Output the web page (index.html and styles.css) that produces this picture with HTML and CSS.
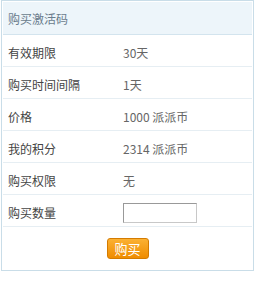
FILE: index.html
```html
<!DOCTYPE html>
<html lang="zh-CN">
<head>
<meta charset="UTF-8">
<title>购买激活码</title>
<link rel="stylesheet" href="styles.css">
</head>
<body>

<div class="box">
<div class="box-title">购买激活码</div>

<div class="row"><span class="label">有效期限</span><span class="value">30天</span></div>
<div class="row"><span class="label">购买时间间隔</span><span class="value">1天</span></div>
<div class="row"><span class="label">价格</span><span class="value">1000 派派币</span></div>
<div class="row"><span class="label">我的积分</span><span class="value">2314 派派币</span></div>
<div class="row"><span class="label">购买权限</span><span class="value">无</span></div>
<div class="row"><span class="label">购买数量</span><span class="value"><input type="text" class="qty"></span></div>

<div class="actions">
<button class="buy">购买</button>
</div>
</div>

</body>
</html>
```

FILE: styles.css
```css
body{
margin:0;
background:#fff;
font-family:"Noto Sans CJK SC", "DejaVu Sans", sans-serif;
font-size:12px;
}

.box{
width:253px;
margin-left:1px;
border:1px solid #c9dde8;
padding:1px;
box-sizing:border-box;
}

/* cabecera */
.box-title{
height:32px;
line-height:33px;
padding-left:5px;
background:#edf5fa;
border-bottom:1px solid #d3e4ee;
color:#6a7c8c;
font-size:12px;
}

/* filas */
.row{
display:grid;
grid-template-columns:115px 1fr;
align-items:center;
height:28px;
padding:3px 0 0 5px;
border-bottom:1px solid #e6eef3;
}

.label{
color:#444;
}

.value{
color:#666;
}

.qty{
display:block;
width:74px;
height:20px;
margin-top:1px;
box-sizing:border-box;
border:1px solid #c8c8c8;
border-top-color:#999;
border-left-color:#999;
padding:0 3px;
font-size:12px;
}

.actions{
height:42px;
display:flex;
align-items:center;
justify-content:center;
}

.buy{
width:42px;
height:21px;
padding:0;
border:1px solid #d47b00;
border-radius:3px;
background:linear-gradient(#fbb133,#ef8c00);
color:#fff;
font-family:"Noto Sans CJK SC", sans-serif;
font-size:13px;
line-height:19px;
margin-top:1px;
}
```
